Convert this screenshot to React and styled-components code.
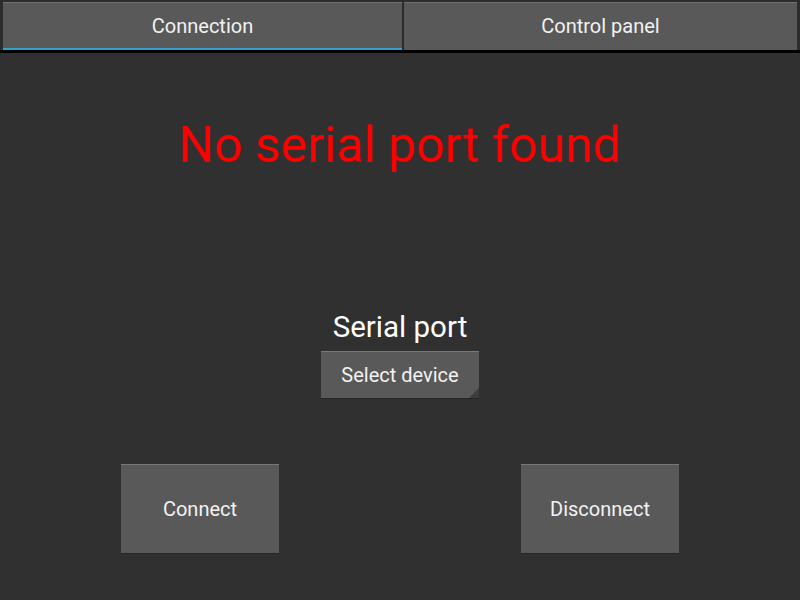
import React from "react";
import styled, { createGlobalStyle } from "styled-components";

const Global = createGlobalStyle`
  html, body { margin: 0; padding: 0; background: #303030; }
  body { font-family: Roboto, "Liberation Sans", sans-serif; }
  #root { width: 800px; height: 600px; overflow: hidden; }
`;

const Screen = styled.div`
  width: 800px;
  height: 600px;
  display: flex;
  flex-direction: column;
  background: #303030;
`;

const TabStrip = styled.div`
  height: 50px;
  display: flex;
  align-items: stretch;
  gap: 2px;
  padding: 2px 3px 0 3px;
  box-sizing: border-box;
  background: #2c2c2c;
`;

const Tab = styled.div`
  flex: ${(p) => (p.$grow ? "1" : "0 0 399px")};
  display: flex;
  align-items: center;
  justify-content: center;
  background: #595959;
  border-top: 1px solid #707070;
  border-bottom: 2px solid ${(p) => (p.$active ? "#34a3c9" : "#595959")};
  color: #f2f2f2;
  font-size: 20px;
  box-sizing: border-box;
`;

const Separator = styled.div`
  height: 3px;
  background: #000;
`;

const Content = styled.div`
  flex: 1;
  display: flex;
  flex-direction: column;
  align-items: center;
  background: #303030;
`;

const Title = styled.div`
  margin-top: 62px;
  height: 60px;
  line-height: 60px;
  font-size: 50px;
  color: #ff0000;
`;

const Label = styled.div`
  margin-top: 135px;
  height: 34px;
  line-height: 34px;
  font-size: 29.5px;
  color: #ffffff;
`;

const Button = styled.div`
  position: relative;
  display: flex;
  align-items: center;
  justify-content: center;
  width: ${(p) => p.$w}px;
  height: ${(p) => p.$h}px;
  background: #595959;
  border-top: 1px solid #787878;
  box-shadow: 0 1px 0 #262626;
  color: #f2f2f2;
  font-size: 20px;
  box-sizing: border-box;
`;

const Corner = styled.div`
  position: absolute;
  right: 0;
  bottom: 0;
  width: 0;
  height: 0;
  border-left: 10px solid transparent;
  border-bottom: 10px solid #3c3c3c;
`;

const SelectWrap = styled.div`
  margin-top: 7px;
`;

const ButtonRow = styled.div`
  margin-top: 66px;
  width: 800px;
  display: flex;
  justify-content: space-around;
`;

export default function App() {
  return (
    <>
      <Global />
      <Screen>
        <TabStrip>
          <Tab $active>Connection</Tab>
          <Tab $grow>Control panel</Tab>
        </TabStrip>
        <Separator />
        <Content>
          <Title>No serial port found</Title>
          <Label>Serial port</Label>
          <SelectWrap>
            <Button $w={158} $h={47}>
              Select device
              <Corner />
            </Button>
          </SelectWrap>
          <ButtonRow>
            <Button $w={158} $h={89}>Connect</Button>
            <Button $w={158} $h={89}>Disconnect</Button>
          </ButtonRow>
        </Content>
      </Screen>
    </>
  );
}
